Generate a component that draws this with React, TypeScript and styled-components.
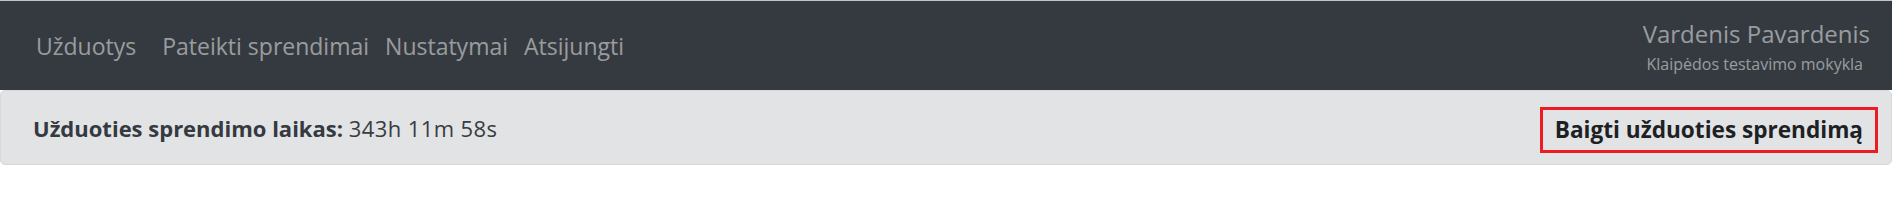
import React from 'react';
import styled, { createGlobalStyle } from 'styled-components';

const GlobalStyle = createGlobalStyle`
  html, body {
    margin: 0;
    padding: 0;
    background: #fff;
    font-family: 'Open Sans', 'Noto Sans', sans-serif;
  }
`;

const Page = styled.div`
  border-top: 1px solid #c4c4c4;
`;

const Navbar = styled.nav`
  height: 89px;
  background: #343a40;
  display: flex;
  align-items: center;
  justify-content: space-between;
  padding: 0 22px 0 28px;
  box-sizing: border-box;
`;

const NavList = styled.div`
  display: flex;
  align-items: center;
  margin-top: 1px;
`;

const NavLink = styled.a<{ $active?: boolean }>`
  font-size: 23px;
  color: rgba(255, 255, 255, 0.5);
  padding: 0 8px;
  margin-right: ${(p) => (p.$active ? '10px' : '0')};
  text-decoration: none;
  cursor: pointer;
`;

const UserBlock = styled.div`
  display: flex;
  flex-direction: column;
  align-items: flex-end;
  color: rgba(255, 255, 255, 0.5);
  margin-top: 2px;
`;

const UserName = styled.span`
  font-size: 24px;
  line-height: 34px;
`;

const SchoolName = styled.small`
  font-size: 16px;
  line-height: 26px;
  margin-right: 7px;
`;

const TimerPanel = styled.div`
  height: 75px;
  box-sizing: border-box;
  background: #e2e3e5;
  border: 1px solid #d6d8db;
  border-radius: 5px;
  display: flex;
  align-items: center;
  justify-content: space-between;
  padding: 0 13px 0 32px;
  color: #383d41;
  font-size: 22px;
`;

const TimerLabel = styled.strong`
  font-weight: 700;
  color: #343a40;
`;

const TimerValue = styled.span`
  letter-spacing: 0.4px;
`;

const FinishButton = styled.button`
  font-family: inherit;
  font-size: 22.6px;
  font-weight: 700;
  color: #1d2124;
  background: transparent;
  border: 3px solid #ed1c24;
  height: 46px;
  margin-top: 4px;
  padding: 0 12px;
  box-sizing: border-box;
  cursor: pointer;
`;

export default function App() {
  return (
    <Page>
      <GlobalStyle />
      <Navbar>
        <NavList>
          <NavLink $active>Užduotys</NavLink>
          <NavLink>Pateikti sprendimai</NavLink>
          <NavLink>Nustatymai</NavLink>
          <NavLink>Atsijungti</NavLink>
        </NavList>
        <UserBlock>
          <UserName>Vardenis Pavardenis</UserName>
          <SchoolName>Klaipėdos testavimo mokykla</SchoolName>
        </UserBlock>
      </Navbar>
      <TimerPanel>
        <span>
          <TimerLabel>Užduoties sprendimo laikas:</TimerLabel>{' '}
          <TimerValue>343h 11m 58s</TimerValue>
        </span>
        <FinishButton>Baigti užduoties sprendimą</FinishButton>
      </TimerPanel>
    </Page>
  );
}
